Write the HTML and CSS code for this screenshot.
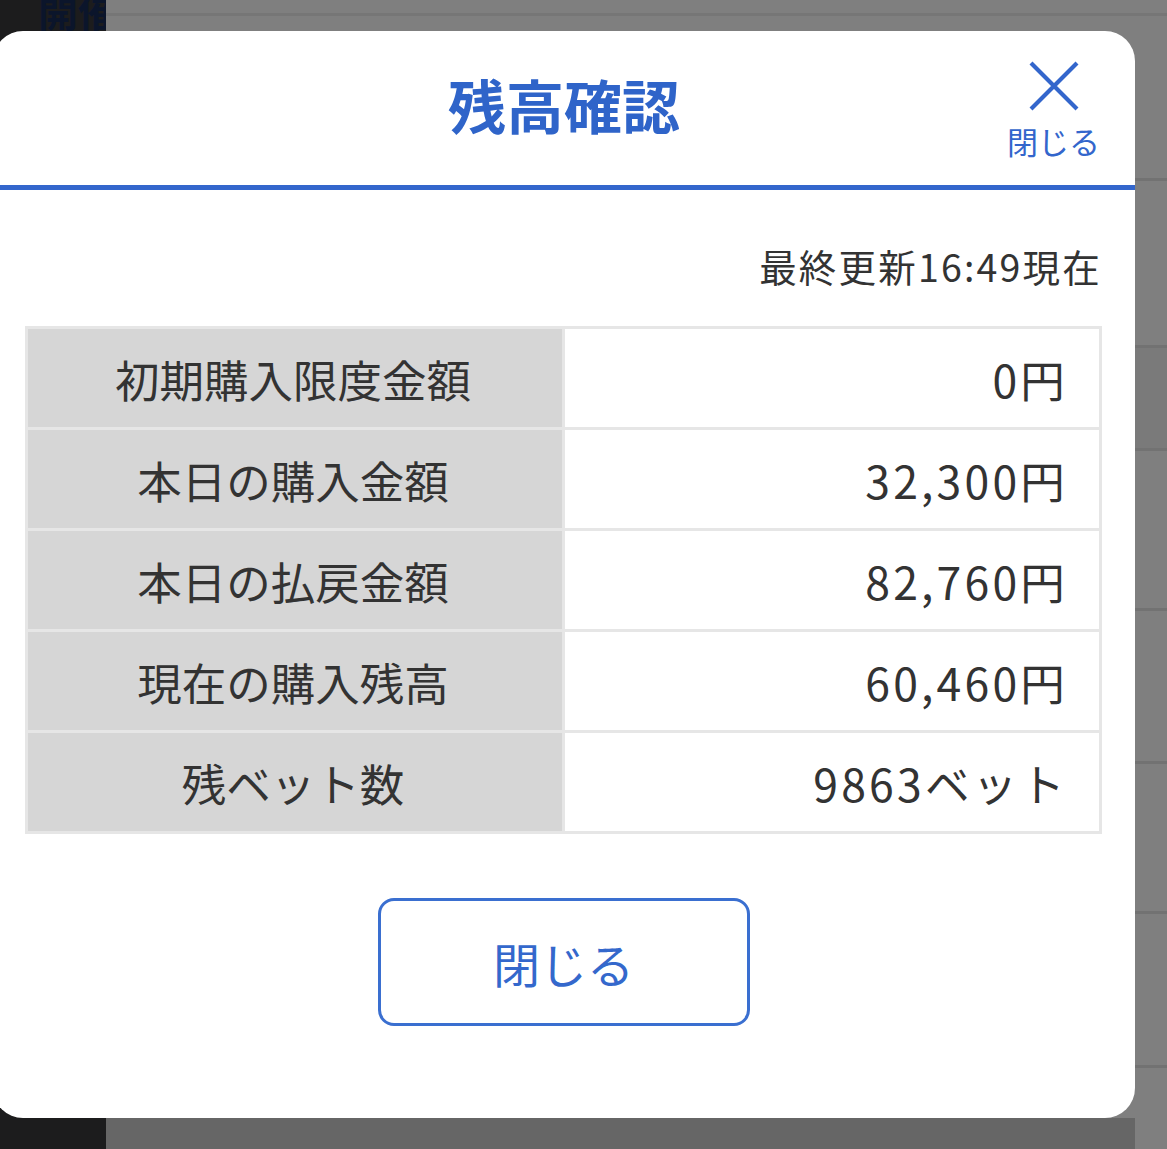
FILE: index.html
```html
<!DOCTYPE html>
<html lang="ja">
<head>
<meta charset="utf-8">
<title>残高確認</title>
<link rel="stylesheet" href="styles.css">
</head>
<body>
<div class="backdrop">
  <aside class="side"><span class="side-title">開催</span></aside>
  <main class="content">
    <div class="band b1"></div>
    <div class="band b2"></div>
    <div class="band b3"></div>
    <div class="band b4 dark"></div>
    <div class="band b5"></div>
    <div class="band b6"></div>
    <div class="band b7"></div>
    <div class="band b8"></div>
    <div class="band b9"></div>
    <div class="footer-bar"></div>
  </main>
</div>

<section class="modal">
  <header class="modal-header">
    <div class="spacer"></div>
    <h1 class="modal-title">残高確認</h1>
    <div class="close-wrap">
      <button class="close-x" type="button">
        <svg width="50" height="50" viewBox="0 0 50 50" aria-hidden="true">
          <path d="M2 2 L48 48 M48 2 L2 48" stroke="#3366cc" stroke-width="4.2" fill="none"/>
        </svg>
        <span class="close-label">閉じる</span>
      </button>
    </div>
  </header>
  <div class="modal-body">
    <p class="updated">最終更新16:49現在</p>
    <table class="balance">
      <tr><th>初期購入限度金額</th><td>0円</td></tr>
      <tr><th>本日の購入金額</th><td>32,300円</td></tr>
      <tr><th>本日の払戻金額</th><td>82,760円</td></tr>
      <tr><th>現在の購入残高</th><td>60,460円</td></tr>
      <tr><th>残ベット数</th><td>9863ベット</td></tr>
    </table>
    <div class="actions">
      <button class="close-btn" type="button">閉じる</button>
    </div>
  </div>
</section>
</body>
</html>
```

FILE: styles.css
```css
* { box-sizing: border-box; }
html, body {
  margin: 0;
  padding: 0;
  width: 1167px;
  height: 1149px;
  overflow: hidden;
  font-family: "Noto Sans CJK JP", "Noto Sans", sans-serif;
}
.backdrop {
  display: flex;
  width: 1167px;
  height: 1149px;
  background: #7f7f7f;
}
.side {
  width: 106px;
  flex: none;
  background: #1c1c1d;
  overflow: hidden;
}
.side-title {
  display: block;
  margin: -14px 0 0 38px;
  font-size: 40px;
  font-weight: 700;
  line-height: 48px;
  color: #0b152b;
  white-space: nowrap;
}
.content {
  flex: 1;
  display: flex;
  flex-direction: column;
}
.band {
  border-bottom: 3px solid #727272;
  flex: none;
}
.b1 { height: 16px; border-bottom-color: #767676; }
.b2 { height: 165px; }
.b3 { height: 167px; }
.b4 { height: 103px; background: #7a7a7a; }
.b5 { height: 160px; }
.b6 { height: 153px; }
.b7 { height: 150px; }
.b8 { height: 154px; }
.b9 { flex: 1; border-bottom: none; }
.footer-bar {
  height: 31px;
  width: 1029px;
  background: #666666;
  flex: none;
}

.modal {
  position: absolute;
  left: -7px;
  top: 31px;
  width: 1142px;
  height: 1087px;
  background: #ffffff;
  border-radius: 30px;
  display: flex;
  flex-direction: column;
}
.modal-header {
  display: grid;
  grid-template-columns: 1fr auto 1fr;
  align-items: center;
  height: 159px;
  border-bottom: 5px solid #3366cc;
  padding: 0 35px 0 35px;
}
.modal-title {
  margin: 0 0 8px 0;
  font-size: 58px;
  font-weight: 700;
  line-height: 70px;
  color: #2f64c9;
}
.close-wrap {
  justify-self: end;
  align-self: start;
  padding-top: 30px;
}
.close-x {
  display: flex;
  flex-direction: column;
  align-items: center;
  background: none;
  border: none;
  padding: 0;
  font-family: inherit;
  cursor: pointer;
}
.close-x svg { display: block; margin-bottom: 13px; }
.close-label {
  font-size: 31px;
  line-height: 34px;
  color: #3366cc;
  white-space: nowrap;
}

.modal-body {
  flex: 1;
  display: flex;
  flex-direction: column;
  padding: 54px 33px 0 32px;
}
.updated {
  margin: 0;
  text-align: right;
  font-size: 37.5px;
  line-height: 44px;
  letter-spacing: 2.2px;
  color: #333333;
  padding-right: 0;
}
.balance {
  margin-top: 38px;
  width: 100%;
  border-collapse: collapse;
  border: 3px solid #e6e6e6;
}
.balance th, .balance td {
  border: 3px solid #e6e6e6;
  height: 101px;
  font-size: 44.5px;
  font-weight: 400;
  color: #333333;
  padding: 0;
}
.balance th {
  width: 50%;
  background: #d6d6d6;
  text-align: center;
  padding-right: 4px;
}
.balance td {
  text-align: right;
  padding-right: 31px;
  letter-spacing: 3.2px;
  background: #ffffff;
}
.actions {
  display: flex;
  justify-content: center;
  margin-top: 64px;
}
.close-btn {
  width: 372px;
  height: 128px;
  border: 3px solid #3a6fd0;
  border-radius: 16px;
  background: #ffffff;
  color: #3468cc;
  font-family: inherit;
  font-size: 47px;
  line-height: 1;
  cursor: pointer;
}
```
